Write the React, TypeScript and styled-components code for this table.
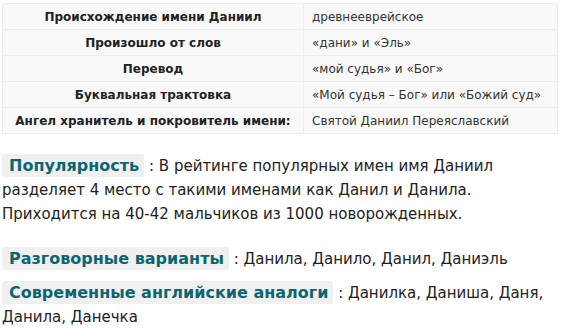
import styled, { createGlobalStyle } from 'styled-components';

const GlobalStyle = createGlobalStyle`
  body {
    margin: 0;
    background: #ffffff;
    font-family: 'DejaVu Sans', Verdana, sans-serif;
    color: #222222;
  }
`;

const facts: [string, string][] = [
  ['Происхождение имени Даниил', 'древнееврейское'],
  ['Произошло от слов', '«дани» и «Эль»'],
  ['Перевод', '«мой судья» и «Бог»'],
  ['Буквальная трактовка', '«Мой судья – Бог» или «Божий суд»'],
  ['Ангел хранитель и покровитель имени:', 'Святой Даниил Переяславский'],
];

const Page = styled.div`
  padding: 3px 4px 0 2px;
`;

const Table = styled.table`
  width: 556px;
  table-layout: fixed;
  border-collapse: collapse;
  background: #f9f9f9;
  font-size: 12px;
  color: #333333;
`;

const Row = styled.tr`
  height: 26px;
`;

const Head = styled.th`
  width: 292px;
  padding: 0 4px;
  border: 1px solid #ececec;
  font-weight: bold;
  text-align: center;
  color: #222222;
  white-space: nowrap;
`;

const Cell = styled.td`
  padding: 0 8px;
  border: 1px solid #ececec;
  text-align: left;
  white-space: nowrap;
`;

const Para = styled.p<{ $gap: number }>`
  margin: ${(p) => p.$gap}px 0 0;
  font-size: 15px;
  line-height: 24px;
`;

const Label = styled.span`
  display: inline-block;
  padding: 0 5px 0 7px;
  line-height: 23px;
  border-radius: 3px;
  background: #f0f0f0;
  color: #0c6670;
  font-weight: bold;
  font-size: 16px;
`;

export default function App() {
  return (
    <Page>
      <GlobalStyle />
      <Table>
        <tbody>
          {facts.map(([k, v]) => (
            <Row key={k}>
              <Head>{k}</Head>
              <Cell>{v}</Cell>
            </Row>
          ))}
        </tbody>
      </Table>
      <Para $gap={20}>
        <Label>Популярность</Label> : В рейтинге популярных имен имя Даниил
        разделяет 4 место с такими именами как Данил и Данила. Приходится на
        40-42 мальчиков из 1000 новорожденных.
      </Para>
      <Para $gap={21}>
        <Label>Разговорные варианты</Label> : Данила, Данило, Данил, Даниэль
      </Para>
      <Para $gap={10}>
        <Label>Современные английские аналоги</Label> : Данилка, Даниша, Даня,
        Данила, Данечка
      </Para>
    </Page>
  );
}
